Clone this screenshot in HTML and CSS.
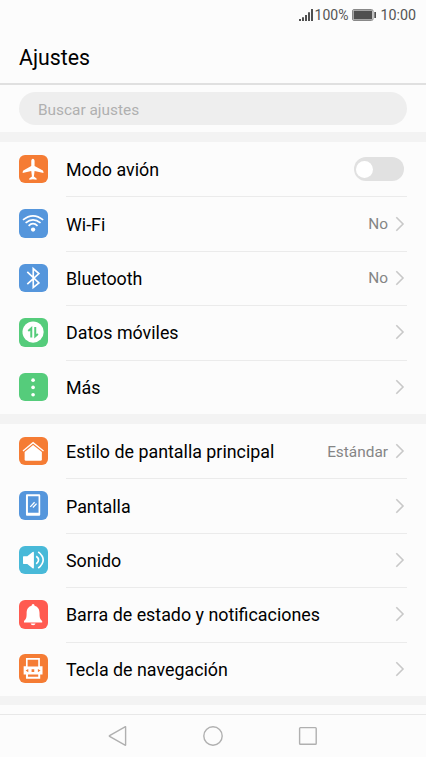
FILE: index.html
```html
<!DOCTYPE html>
<html lang="es">
<head>
    <meta charset="UTF-8">
    <meta name="viewport" content="width=device-width, initial-scale=1.0">
    <title>Ajustes</title>
    <link rel="stylesheet" href="styles.css">
</head>
<body>
    <div class="phone">
        <div class="status-bar">
            <svg class="signal" viewBox="0 0 14 12">
                <path d="M0 12V10H2V12ZM3 12V8.2H5V12ZM6 12V6H8V12ZM9 12V3.2H11V12ZM12 12V0H14V12Z"/>
            </svg>
            <span class="percent">100%</span>
            <svg class="battery" viewBox="0 0 24 12">
                <rect x="0.5" y="0.5" width="20.5" height="11" rx="1.5" class="battery-case"/>
                <rect x="1.5" y="1.5" width="18.5" height="9"/>
                <rect x="22.3" y="3" width="1.7" height="6"/>
            </svg>
            <span class="clock">10:00</span>
        </div>

        <header class="header">
            <h1>Ajustes</h1>
        </header>

        <div class="search">
            <input type="text" placeholder="Buscar ajustes">
        </div>

        <main class="settings">
            <ul class="group">
                <li class="row">
                    <svg class="icon orange" viewBox="0 0 86 86">
                        <path class="fill" d="M42 11C45 11 47 14 47 18V33L72 47Q74 49 74 54L47 48L45 65L53 71V75L42 73L31 75V71L39 65L37 48L11 54Q11 49 13 47L37 33V18C37 14 39 11 42 11Z"/>
                    </svg>
                    <div class="content">
                        <span class="label">Modo avión</span>
                        <span class="switch"></span>
                    </div>
                </li>
                <li class="row">
                    <svg class="icon blue" viewBox="0 0 86 86">
                        <path class="line" d="M12 33Q42 8 73 33M20 42Q42 23 65 42M29 51Q42 38 56 51"/>
                        <circle class="fill" cx="42.5" cy="62" r="6.5"/>
                    </svg>
                    <div class="content">
                        <span class="label">Wi-Fi</span>
                        <span class="value">No</span>
                        <svg class="chevron" viewBox="0 0 10 16"><path d="M1.3 1.3L8 8L1.3 14.7"/></svg>
                    </div>
                </li>
                <li class="row">
                    <svg class="icon blue" viewBox="0 0 86 86">
                        <path class="line" d="M25 24L60 57L43 71V14L60 29L25 61"/>
                    </svg>
                    <div class="content">
                        <span class="label">Bluetooth</span>
                        <span class="value">No</span>
                        <svg class="chevron" viewBox="0 0 10 16"><path d="M1.3 1.3L8 8L1.3 14.7"/></svg>
                    </div>
                </li>
                <li class="row">
                    <svg class="icon green" viewBox="0 0 86 86">
                        <circle class="fill" cx="42.5" cy="42.5" r="32"/>
                        <path class="line tint" d="M28 39L37 31V59M49 27V55L57 48"/>
                    </svg>
                    <div class="content">
                        <span class="label">Datos móviles</span>
                        <svg class="chevron" viewBox="0 0 10 16"><path d="M1.3 1.3L8 8L1.3 14.7"/></svg>
                    </div>
                </li>
                <li class="row">
                    <svg class="icon green" viewBox="0 0 86 86">
                        <circle class="fill" cx="42.5" cy="21.5" r="5.5"/>
                        <circle class="fill" cx="42.5" cy="43.5" r="5.5"/>
                        <circle class="fill" cx="42.5" cy="65.5" r="5.5"/>
                    </svg>
                    <div class="content">
                        <span class="label">Más</span>
                        <svg class="chevron" viewBox="0 0 10 16"><path d="M1.3 1.3L8 8L1.3 14.7"/></svg>
                    </div>
                </li>
            </ul>

            <ul class="group">
                <li class="row">
                    <svg class="icon orange" viewBox="0 0 86 86">
                        <path class="line thin" d="M12 42L42.5 17L74 42"/>
                        <path class="fill" d="M17 45L42.5 24L69 45V68Q69 72 65 72H21Q17 72 17 68Z"/>
                    </svg>
                    <div class="content">
                        <span class="label">Estilo de pantalla principal</span>
                        <span class="value">Estándar</span>
                        <svg class="chevron" viewBox="0 0 10 16"><path d="M1.3 1.3L8 8L1.3 14.7"/></svg>
                    </div>
                </li>
                <li class="row">
                    <svg class="icon blue" viewBox="0 0 86 86">
                        <path class="fill" fill-rule="evenodd" d="M24 10H61Q64 10 64 13V72Q64 75 61 75H24Q21 75 21 72V13Q21 10 24 10ZM27 16V66H59V16Z"/>
                        <path class="line thin" d="M34 48L47 34M42 50L53 38"/>
                    </svg>
                    <div class="content">
                        <span class="label">Pantalla</span>
                        <svg class="chevron" viewBox="0 0 10 16"><path d="M1.3 1.3L8 8L1.3 14.7"/></svg>
                    </div>
                </li>
                <li class="row">
                    <svg class="icon cyan" viewBox="0 0 86 86">
                        <path class="fill" d="M14 31H25L41 18Q45 16 45 20V65Q45 69 41 67L25 54H14Q12 54 12 52V33Q12 31 14 31Z"/>
                        <path class="line" d="M52 31Q66 42 52 54M58 18Q88 42 58 67"/>
                    </svg>
                    <div class="content">
                        <span class="label">Sonido</span>
                        <svg class="chevron" viewBox="0 0 10 16"><path d="M1.3 1.3L8 8L1.3 14.7"/></svg>
                    </div>
                </li>
                <li class="row">
                    <svg class="icon red" viewBox="0 0 86 86">
                        <path class="fill" d="M42.5 12Q47 12 47 17C58 20 62 29 62 40C62 53 63 57 70 63V68H15V63C22 57 23 53 23 40C23 29 27 20 38 17Q38 12 42.5 12ZM35 71H50Q49 76 42.5 76Q36 76 35 71Z"/>
                    </svg>
                    <div class="content">
                        <span class="label">Barra de estado y notificaciones</span>
                        <svg class="chevron" viewBox="0 0 10 16"><path d="M1.3 1.3L8 8L1.3 14.7"/></svg>
                    </div>
                </li>
                <li class="row">
                    <svg class="icon orange" viewBox="0 0 86 86">
                        <path class="fill" fill-rule="evenodd" d="M21 12H63V37H71V62H64V75H21V62H14V37H21ZM26 17V38H58V17ZM27 62V69H58V62ZM20 50L28 45V55ZM38 46H46V54H38ZM65 50L57 45V55Z"/>
                    </svg>
                    <div class="content">
                        <span class="label">Tecla de navegación</span>
                        <svg class="chevron" viewBox="0 0 10 16"><path d="M1.3 1.3L8 8L1.3 14.7"/></svg>
                    </div>
                </li>
            </ul>
        </main>

        <nav class="nav-bar">
            <svg viewBox="0 0 20 20"><path d="M17.6 1V19Q17.6 19.5 17 19.2L1.6 10.4Q1 10 1.6 9.6L17 .8Q17.6 .5 17.6 1Z"/></svg>
            <svg viewBox="0 0 20 20"><circle cx="10" cy="10" r="9.2"/></svg>
            <svg viewBox="0 0 20 20"><rect x="1.6" y="1.6" width="16.6" height="16.6" rx=".8"/></svg>
        </nav>
    </div>
</body>
</html>
```
FILE: styles.css
```css
* {
    box-sizing: border-box;
}
body {
    margin: 0;
    font-family: Roboto, sans-serif;
    background-color: #fcfcfc;
    color: #000;
}
.phone {
    display: flex;
    flex-direction: column;
    width: 426px;
    height: 757px;
    overflow: hidden;
}
.status-bar {
    display: flex;
    justify-content: flex-end;
    align-items: center;
    height: 29px;
    padding-right: 10px;
    font-size: 14.3px;
    color: #555;
    fill: #505050;
}
.signal {
    width: 14px;
    height: 12px;
    margin-right: 2px;
}
.percent {
    font-size: 14px;
}
.battery {
    width: 24px;
    height: 12px;
    margin: 0 4px;
}
.battery-case {
    fill: none;
    stroke: #888;
}
.header {
    display: flex;
    align-items: center;
    height: 56px;
    padding: 2px 19px 0;
    border-bottom: 2px solid #e0e0e0;
}
.header h1 {
    margin: 0;
    font-size: 21.3px;
    font-weight: 400;
}
.search {
    height: 47px;
    padding: 7px 19px 0;
}
.search input {
    display: block;
    width: 100%;
    height: 33px;
    padding: 2px 19px 0;
    border: none;
    border-radius: 17px;
    background-color: #eee;
    font-family: inherit;
    font-size: 15.4px;
}
.search input::placeholder {
    color: #b0b0b0;
}
.settings {
    flex: 1;
    border-bottom: 9px solid #f3f3f3;
}
.group {
    margin: 0;
    padding: 0;
    list-style: none;
    border-top: 10px solid #f3f3f3;
}
.row {
    display: flex;
    align-items: center;
    height: 54.4px;
    padding: 0 19px;
}
.icon {
    width: 28.5px;
    height: 28.5px;
    margin-right: 18.5px;
    border-radius: 6px;
}
.orange {
    background-color: #f57c34;
}
.blue {
    background-color: #5596dc;
}
.green {
    background-color: #55cc7b;
}
.cyan {
    background-color: #48b9d8;
}
.red {
    background-color: #ff5a50;
}
.fill {
    fill: #fff;
}
.line {
    fill: none;
    stroke: #fff;
    stroke-width: 5;
}
.thin {
    stroke-width: 4;
}
.tint {
    stroke: #55cc7b;
    stroke-width: 6;
}
.content {
    flex: 1;
    display: flex;
    align-items: center;
    height: 100%;
    padding-right: 2px;
    box-shadow: 0 1px 0 #ebebeb;
}
.row:last-child .content {
    box-shadow: none;
}
.label {
    flex: 1;
    padding-top: 1px;
    font-size: 17.85px;
}
.value {
    padding-top: 1px;
    font-size: 15.4px;
    color: #858585;
}
.chevron {
    width: 10px;
    height: 16px;
    margin-left: 7px;
    fill: none;
    stroke: #c8c8c8;
    stroke-width: 1.6;
}
.switch {
    width: 50px;
    height: 24px;
    padding: 3.5px 2px;
    margin-right: 1px;
    border-radius: 12px;
    background-color: #e1e1e1;
}
.switch::before {
    content: "";
    display: block;
    width: 17px;
    height: 17px;
    border-radius: 50%;
    background-color: #fff;
}
.nav-bar {
    display: flex;
    justify-content: center;
    align-items: center;
    gap: 75px;
    height: 43px;
    margin-top: 9px;
    border-top: 1px solid #e8e8e8;
}
.nav-bar svg {
    width: 20px;
    height: 20px;
    fill: none;
    stroke: #b0b0b0;
    stroke-width: 1.4;
}
```
